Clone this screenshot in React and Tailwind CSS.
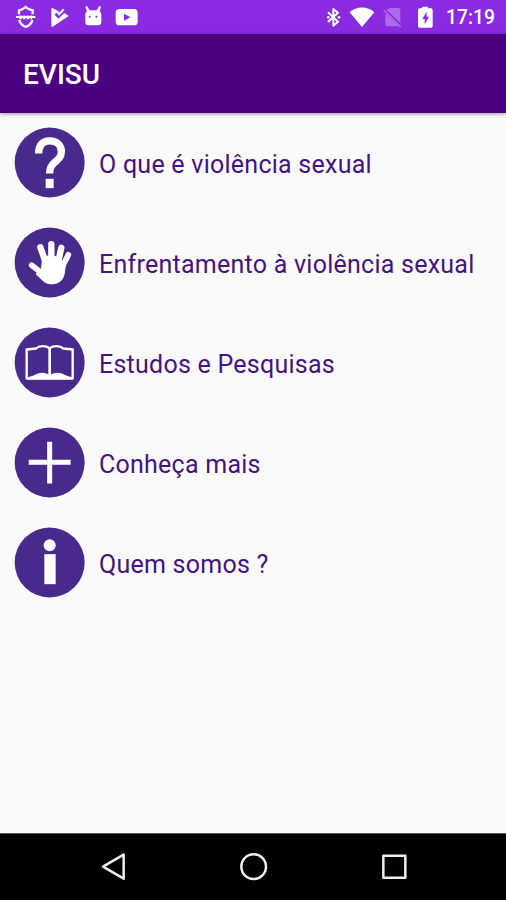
const menuItems = [
  { label: 'O que é violência sexual', icon: QuestionIcon },
  { label: 'Enfrentamento à violência sexual', icon: HandIcon },
  { label: 'Estudos e Pesquisas', icon: BookIcon },
  { label: 'Conheça mais', icon: PlusIcon },
  { label: 'Quem somos ?', icon: InfoIcon },
];

function QuestionIcon() {
  return (
    <>
      <path d="M116 116C116 91 128 78 149 78C171 78 184 92 184 110C184 126 176 132 165 142C154 151 149 158 149 176" fill="none" stroke="#fff" strokeWidth="22" />
      <rect x="137" y="192" width="24" height="28" fill="#fff" />
    </>
  );
}

function HandIcon() {
  return (
    <g fill="#fff" stroke="#fff" strokeLinecap="round" strokeLinejoin="round">
      <path d="M95 151L128 177" strokeWidth="17" />
      <path d="M121 97L136 140" strokeWidth="19" />
      <path d="M154 88V140" strokeWidth="19" />
      <path d="M184 99L174 144" strokeWidth="19" />
      <path d="M205 120L187 155" strokeWidth="17" />
      <path d="M129 126L156 122L178 129L196 152C193 170 194 186 182 198C168 210 144 210 131 199L108 177L124 162Z" strokeWidth="3" />
    </g>
  );
}

function BookIcon() {
  return (
    <>
      <path d="M149 100C137 92 118 92 108 101L80 104V191H218V104L190 101C179 92 160 92 149 100Z" fill="none" stroke="#fff" strokeWidth="7" strokeLinejoin="round" />
      <path d="M149 100V181" stroke="#fff" strokeWidth="8" />
      <path d="M84 187C103 184 112 174 126 174C136 174 143 177 149 181C155 177 163 174 173 174C187 174 196 184 215 187V193H84Z" fill="#fff" />
    </>
  );
}

function PlusIcon() {
  return <path d="M149 81V206M86 142H212" stroke="#fff" strokeWidth="15" />;
}

function InfoIcon() {
  return (
    <>
      <circle cx="149" cy="91" r="18" fill="#fff" />
      <rect x="133" y="118" width="34" height="90" fill="#fff" />
    </>
  );
}

function StatusBar() {
  return (
    <div className="flex h-[34px] items-center justify-between bg-[#8a2be2] text-white">
      <svg className="h-[34px] w-[140px]" viewBox="0 0 420 102" fill="#fff">
        <g fill="none" stroke="#fff" strokeWidth="7">
          <path d="M57 43V31C65 30 71 27 77 21C83 27 89 30 98 31V43M58 60C60 70 68 77 77 81C87 77 95 70 97 60" />
          <path d="M48 51H106" strokeWidth="6" />
          <path d="M58 52H97" strokeWidth="11" strokeDasharray="7 4" />
        </g>
        <path d="M157 24L176 34V42L168 39L164 44L175 56L193 39L206 48L158 80Q154 82 154 77V26Q154 22 157 24Z" />
        <path d="M175 45L191 28" stroke="#fff" strokeWidth="6" />
        <path fillRule="evenodd" d="M256 42Q256 37 261 34L256 20L261 18L269 31H290L298 18L303 20L299 34Q304 38 304 43V66Q304 76 294 76H266Q256 76 256 66V43ZM266 50A3 3 0 1 0 272 50A3 3 0 1 0 266 50M286 50A3 3 0 1 0 292 50A3 3 0 1 0 286 50" />
        <path fillRule="evenodd" d="M359 27H402Q413 27 413 38V65Q413 76 402 76H359Q347 76 347 65V38Q347 27 359 27ZM372 41V62L391 51.5Z" />
      </svg>
      <div className="flex h-full items-center">
        <svg className="h-[34px] w-[118px]" viewBox="48 0 354 102" fill="#fff">
          <path d="M54 37L84 65L70 77V27L84 38L54 66" fill="none" stroke="#fff" strokeWidth="6" strokeLinejoin="round" />
          <circle cx="55" cy="52" r="4" />
          <circle cx="87" cy="52" r="4" />
          <path d="M119 37C138 18 174 18 193 37L156 81Z" />
          <path d="M240 24H265Q271 24 271 30V69L229 29ZM226 40L266 79H232Q226 79 226 73Z" opacity=".3" />
          <path d="M221 30L272 81" stroke="#fff" strokeWidth="5" opacity=".3" />
          <path fillRule="evenodd" d="M337 20H354V25H363Q368 25 368 30V79Q368 83 363 83H329Q324 83 324 79V30Q324 25 329 25H337ZM350 35L337 57H344V73L357 50H350Z" />
        </svg>
        <span className="mt-[2px] w-[62px] pl-[2px] text-[19.3px] leading-none font-medium">17:19</span>
      </div>
    </div>
  );
}

function NavigationBar() {
  return (
    <div className="flex h-[67px] items-center border-t border-[#555] bg-black pl-20">
      <svg className="h-[66px] w-[350px]" viewBox="0 42 1050 198" fill="none" stroke="#eee" strokeWidth="7.5" strokeLinejoin="round">
        <path d="M69 140L131 104V176Z" />
        <circle cx="521" cy="140" r="37" />
        <rect x="910" y="107" width="66" height="66" />
      </svg>
    </div>
  );
}

function App() {
  return (
    <div className="flex h-[900px] w-[506px] flex-col overflow-hidden bg-[#fafafa] font-[Roboto,sans-serif]">
      <StatusBar />
      <header className="z-10 flex h-[79px] items-center bg-[#4b0082] pl-[23px] shadow-[0_1px_4px_rgba(0,0,0,0.4)]">
        <h1 className="mt-[3px] text-[28px] leading-none font-medium text-white">EVISU</h1>
      </header>

      <ul className="flex-1">
        {menuItems.map(({ label, icon: Icon }) => (
          <li key={label} className="flex h-[100px] items-center pl-[14px]">
            <svg className="mb-px h-[71px] w-[71px] shrink-0" viewBox="42 36.5 213 213">
              <circle cx="149" cy="143" r="105" fill="#482a8c" />
              <Icon />
            </svg>
            <span className="mt-[2px] ml-[14px] text-[25px] leading-none tracking-[0.25px] whitespace-nowrap text-[#431482]">
              {label}
            </span>
          </li>
        ))}
      </ul>

      <NavigationBar />
    </div>
  );
}

export default App;
